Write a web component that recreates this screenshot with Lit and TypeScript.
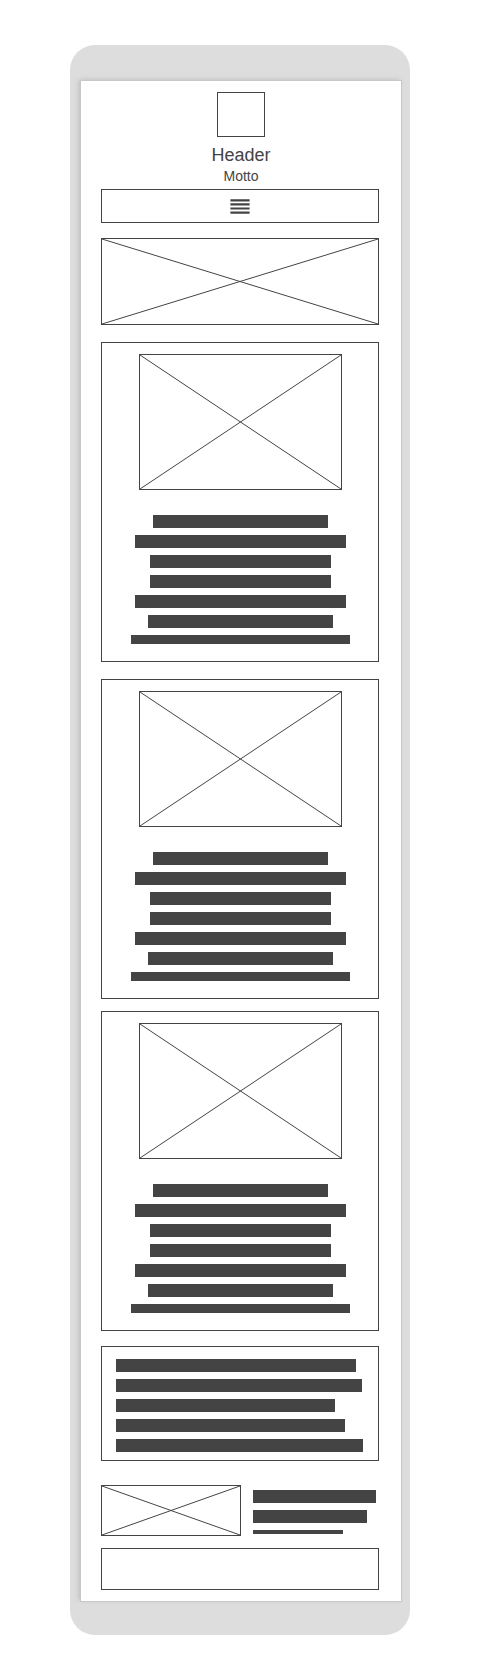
import { LitElement, html, css, svg } from "lit";
import { customElement, property } from "lit/decorators.js";

interface Bar {
  width: number;
  height?: number;
}

const CARD_BARS: Bar[] = [
  { width: 175 },
  { width: 211 },
  { width: 181 },
  { width: 181 },
  { width: 211 },
  { width: 185 },
  { width: 219, height: 9 },
];

const SUMMARY_BARS: Bar[] = [
  { width: 240 },
  { width: 246 },
  { width: 219 },
  { width: 229 },
  { width: 247 },
];

const FOOTER_BARS: Bar[] = [
  { width: 123 },
  { width: 114 },
  { width: 90, height: 4 },
];

/** Outlined picture placeholder with both diagonals. */
@customElement("image-box")
export class ImageBox extends LitElement {
  static styles = css`
    :host {
      display: block;
      box-sizing: border-box;
      border: 1px solid #444;
    }
    .cross {
      display: block;
      width: 100%;
      height: 100%;
    }
  `;

  render() {
    return html`<svg class="cross" role="img" aria-label="Image" preserveAspectRatio="none">
      ${svg`<line x1="0" y1="0" x2="100%" y2="100%" stroke="#444" stroke-width="1" />
      <line x1="0" y1="100%" x2="100%" y2="0" stroke="#444" stroke-width="1" />`}
    </svg>`;
  }
}

/** Lines of placeholder copy. */
@customElement("text-bars")
export class TextBars extends LitElement {
  @property({ attribute: false }) bars: Bar[] = [];

  static styles = css`
    :host {
      display: flex;
      flex-direction: column;
      gap: 7px;
    }
    .bar {
      max-width: 100%;
      background: #444;
    }
  `;

  render() {
    return this.bars.map(
      (b) => html`<div class="bar" style="width:${b.width}px;height:${b.height ?? 13}px"></div>`
    );
  }
}

@customElement("app-root")
export class AppRoot extends LitElement {
  static styles = css`
    :host {
      display: block;
      padding: 45px 16px;
      font-family: "Liberation Sans", Arial, sans-serif;
      color: #444;
      background: #fff;
    }
    * {
      box-sizing: border-box;
    }
    .phone {
      max-width: 340px;
      margin: 0 auto;
      padding: 36px 9px 34px 11px;
      border-radius: 25px;
      background: #ddd;
    }
    .screen {
      display: flex;
      flex-direction: column;
      padding: 11px 22px 11px 20px;
      background: #fff;
      box-shadow: 0 0 0 1px #c8c8c8, -2px -1px 5px #bbb;
    }
    .masthead {
      display: flex;
      flex-direction: column;
      align-items: center;
      padding-left: 2px;
    }
    .logo {
      width: 48px;
      height: 45px;
      margin-bottom: 8px;
      border: 1px solid #444;
    }
    .title {
      margin: 0;
      font-size: 18px;
      line-height: 21px;
      font-weight: 400;
    }
    .motto {
      margin: 0 0 3px;
      font-size: 14px;
      line-height: 20px;
    }
    .menu {
      display: flex;
      align-items: center;
      justify-content: center;
      width: 100%;
      height: 34px;
      padding: 0;
      border: 1px solid #444;
      background: #fff;
      color: #444;
      cursor: pointer;
    }
    .menu-icon {
      display: block;
    }
    .banner {
      height: 87px;
      margin: 15px 0 17px;
    }
    .cards {
      display: flex;
      flex-direction: column;
    }
    .card {
      padding: 11px 28px 17px 29px;
      border: 1px solid #444;
    }
    .card + .card {
      margin-top: 17px;
    }
    .card + .card:last-child {
      margin-top: 12px;
    }
    .photo {
      height: 136px;
      margin: 0 8px 25px;
    }
    .centered {
      align-items: center;
    }
    .summary {
      margin-top: 15px;
      padding: 12px 14px 8px;
      border: 1px solid #444;
    }
    .about {
      display: flex;
      gap: 12px;
      margin: 24px 0 12px;
    }
    .thumb {
      flex: 0 1 140px;
      height: 51px;
    }
    .about-text {
      flex: 1 1 0;
      padding-top: 5px;
    }
    .footer {
      height: 42px;
      border: 1px solid #444;
    }
  `;

  render() {
    return html`
      <div class="phone">
        <div class="screen">
          <header class="masthead">
            <div class="logo"></div>
            <h1 class="title">Header</h1>
            <p class="motto">Motto</p>
          </header>
          <nav>
            <button class="menu" type="button" aria-label="Menu">
              <svg class="menu-icon" width="20" height="16" viewBox="0 0 20 16" aria-hidden="true">
                <path
                  d="M.4 2.3h19.2M.4 6.4h19.2M.4 10.5h19.2M.4 14.7h19.2"
                  fill="none" stroke="currentColor" stroke-width="2.2"
                />
              </svg>
            </button>
          </nav>
          <image-box class="banner"></image-box>
          <main class="cards">
            ${[1, 2, 3].map(
              () => html`<article class="card">
                <image-box class="photo"></image-box>
                <text-bars class="centered" .bars=${CARD_BARS}></text-bars>
              </article>`
            )}
          </main>
          <section class="summary">
            <text-bars .bars=${SUMMARY_BARS}></text-bars>
          </section>
          <section class="about">
            <image-box class="thumb"></image-box>
            <text-bars class="about-text" .bars=${FOOTER_BARS}></text-bars>
          </section>
          <footer class="footer"></footer>
        </div>
      </div>
    `;
  }
}
